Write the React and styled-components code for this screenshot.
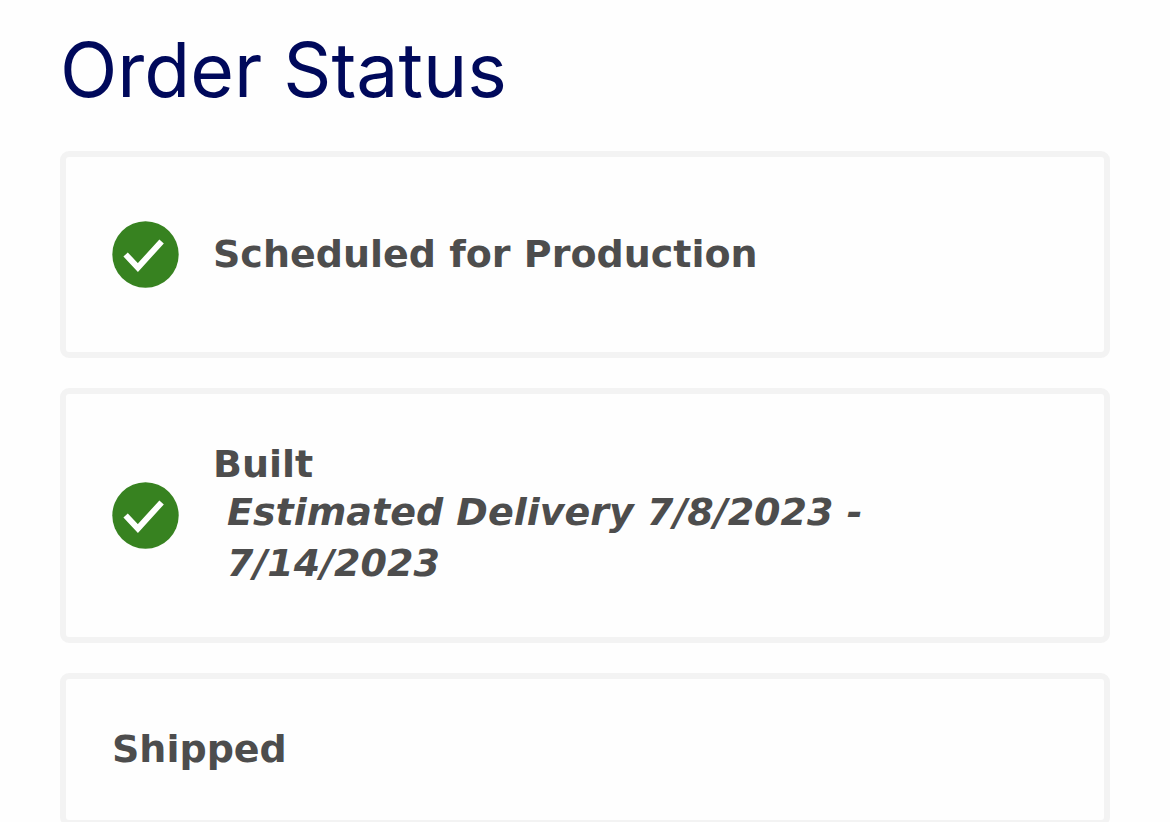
import React from 'react';
import styled, { createGlobalStyle } from 'styled-components';

const GlobalStyle = createGlobalStyle`
  * {
    box-sizing: border-box;
  }

  body {
    margin: 0;
    background-color: #fefefe;
    font-family: Inter, 'Open Sans', sans-serif;
  }
`;

const Page = styled.main`
  height: 100vh;
  padding: 24px 60px 0;
  overflow: hidden;
`;

const Title = styled.h1`
  margin: 0 0 35px;
  color: #00095b;
  font-size: 75px;
  font-weight: 400;
  line-height: 92px;
`;

const StepList = styled.ol`
  display: flex;
  flex-direction: column;
  gap: 30px;
  margin: 0;
  padding: 0;
  list-style: none;
`;

const Step = styled.li`
  display: flex;
  align-items: center;
  gap: 34px;
  min-height: ${props => props.$tall ? '207px' : '0'};
  padding: 48px 46px;
  border: 6px solid #f3f3f3;
  border-radius: 9px;
`;

const CheckIcon = styled.svg`
  flex: none;
  width: 67px;
  height: 67px;
`;

const StepText = styled.div`
  max-width: 700px;
  color: #4d4d4d;
  font-family: 'DejaVu Sans', Verdana, sans-serif;
  font-size: 38px;
  font-weight: 700;
`;

const StepName = styled.div`
  line-height: 45px;
`;

const Estimate = styled.em`
  display: block;
  padding-left: 14px;
  line-height: 51px;
`;

const steps = [
  { name: 'Scheduled for Production', done: true, tall: true },
  { name: 'Built', done: true, estimate: 'Estimated Delivery 7/8/2023 - 7/14/2023' },
  { name: 'Shipped' },
];

const Check = () => (
  <CheckIcon viewBox="0 0 67 67" role="img" aria-label="Complete">
    <circle cx="33.5" cy="33.5" r="33.2" fill="#378220" />
    <path d="M13.6 33.5L25.9 46.6L49.6 20.4" fill="none" stroke="#fff" strokeWidth="6" />
  </CheckIcon>
);

const App = () => (
  <>
    <GlobalStyle />
    <Page>
      <Title>Order Status</Title>
      <StepList>
        {steps.map(step => (
          <Step key={step.name} $tall={step.tall}>
            {step.done ? <Check /> : null}
            <StepText>
              <StepName>{step.name}</StepName>
              {step.estimate ? <Estimate>{step.estimate}</Estimate> : null}
            </StepText>
          </Step>
        ))}
      </StepList>
    </Page>
  </>
);

export default App;
